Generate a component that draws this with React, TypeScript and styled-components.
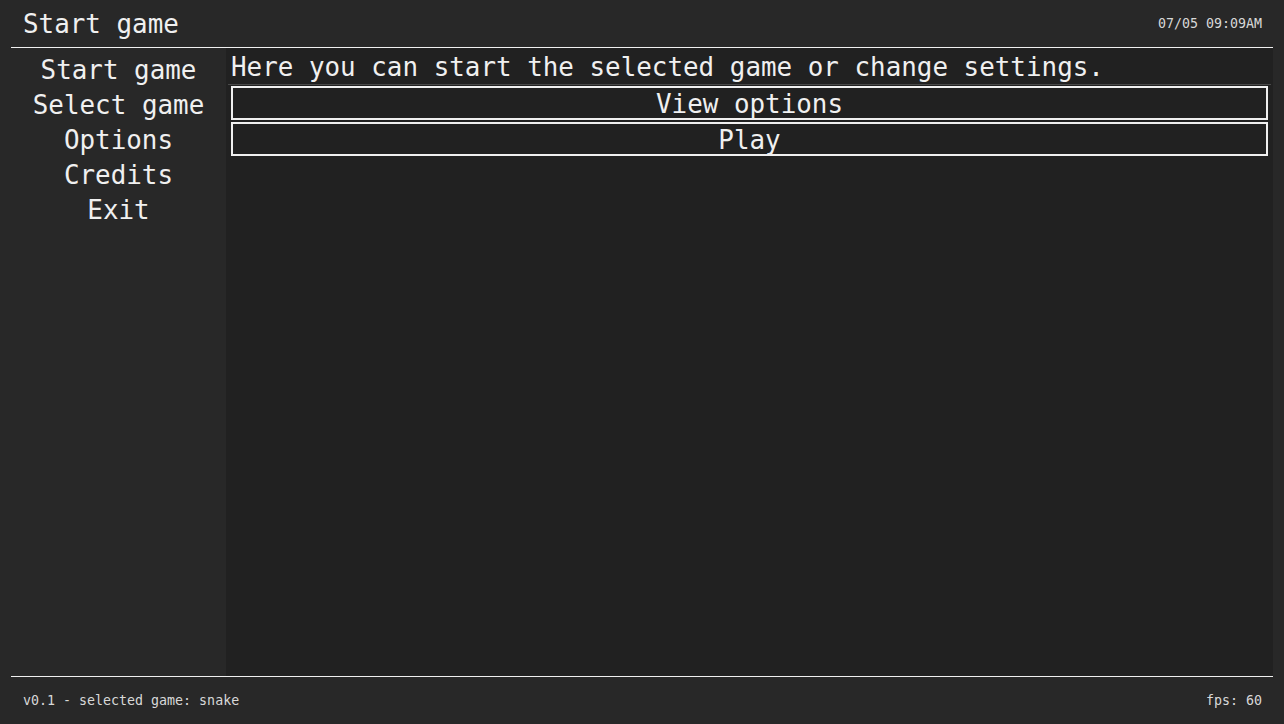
import React from 'react';
import styled, { createGlobalStyle } from 'styled-components';

const GlobalStyle = createGlobalStyle`
  html, body {
    margin: 0;
    padding: 0;
    background: #282828;
  }
  body {
    font-family: "DejaVu Sans Mono", "Liberation Mono", monospace;
    color: #f0f0f0;
  }
`;

// 整体框架
const Screen = styled.div`
  width: 1284px;
  height: 724px;
  box-sizing: border-box;
  padding: 0 11px;
  display: flex;
  flex-direction: column;
  background: #282828;
  overflow: hidden;
`;

const Header = styled.header`
  height: 47px;
  flex: none;
  display: flex;
  align-items: center;
  justify-content: space-between;
  padding: 0 11px 0 12px;
  border-bottom: 1px solid #f0f0f0;
`;

const Title = styled.h1`
  margin: 0;
  font-size: 25.9px;
  font-weight: normal;
  line-height: 1;
  padding-top: 2px;
`;

const SmallText = styled.span`
  font-size: 13.3px;
  color: #d8d8d8;
  line-height: 1;
`;

const Body = styled.div`
  flex: 1;
  min-height: 0;
  display: flex;
`;

const Sidebar = styled.nav`
  width: 215px;
  flex: none;
  padding-top: 5px;
  box-sizing: border-box;
  background: #282828;
  display: flex;
  flex-direction: column;
  align-items: center;
`;

const MenuItem = styled.div`
  font-size: 25.9px;
  line-height: 35px;
  height: 35px;
  text-align: center;
  cursor: pointer;
`;

const Main = styled.main`
  flex: 1;
  background: #212121;
  display: flex;
  flex-direction: column;
  padding: 0 5px;
`;

const Intro = styled.p`
  margin: 0 -3px;
  padding: 2px 3px 0;
  font-size: 25.9px;
  line-height: 34px;
  height: 34px;
  border-bottom: 1px solid #4a4a4a;
`;

const ActionButton = styled.button`
  margin-top: 1px;
  height: 34px;
  border: 2px solid #f0f0f0;
  background: transparent;
  color: #f0f0f0;
  font-family: inherit;
  font-size: 25.9px;
  line-height: 1;
  padding: 3px 0 0;
  cursor: pointer;

  & + & {
    margin-top: 2px;
  }
`;

const Footer = styled.footer`
  height: 47px;
  flex: none;
  display: flex;
  align-items: center;
  justify-content: space-between;
  padding: 0 11px 0 12px;
  border-top: 1px solid #f0f0f0;
`;

const menu = ['Start game', 'Select game', 'Options', 'Credits', 'Exit'];

const App: React.FC = () => {
  return (
    <>
      <GlobalStyle />
      <Screen>
        <Header>
          <Title>Start game</Title>
          <SmallText>07/05 09:09AM</SmallText>
        </Header>
        <Body>
          <Sidebar>
            {menu.map((item) => (
              <MenuItem key={item}>{item}</MenuItem>
            ))}
          </Sidebar>
          <Main>
            <Intro>Here you can start the selected game or change settings.</Intro>
            <ActionButton>View options</ActionButton>
            <ActionButton>Play</ActionButton>
          </Main>
        </Body>
        <Footer>
          <SmallText>v0.1 - selected game: snake</SmallText>
          <SmallText>fps: 60</SmallText>
        </Footer>
      </Screen>
    </>
  );
};

export default App;
